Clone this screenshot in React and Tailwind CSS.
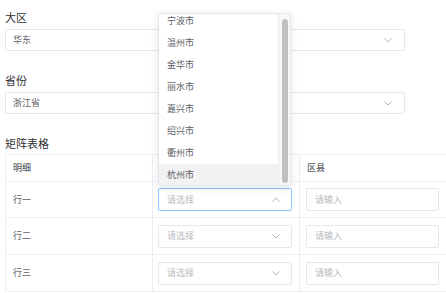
import { useState } from 'react'

const cities = ['宁波市', '温州市', '金华市', '丽水市', '嘉兴市', '绍兴市', '衢州市', '杭州市']
const rows = ['行一', '行二', '行三']

const Chevron = ({ up = false }) => (
  <svg width="8" height="5" viewBox="0 0 8 5" className="shrink-0">
    <path
      d={up ? 'M0.5 4.5 L4 1 L7.5 4.5' : 'M0.5 0.5 L4 4 L7.5 0.5'}
      fill="none"
      stroke="#a8abb2"
      strokeWidth="0.9"
    />
  </svg>
)

const Field = ({ label, value }) => (
  <div className="flex flex-col">
    <p className="h-[14px] text-[11px] leading-[14px] text-[#303133]">{label}</p>
    <div className="mt-[5px] flex h-[22px] w-[400px] items-center justify-between rounded-[2px] border border-[#e4e7ed] pl-[7px] pr-[12px] text-[9px] text-[#606266]">
      <span>{value}</span>
      <Chevron />
    </div>
  </div>
)

export default function App() {
  const [open] = useState(true)

  return (
    <div className="relative h-[293px] w-[446px] overflow-hidden bg-white pl-[5px] pt-[10px] font-['Noto_Sans_CJK_SC','Noto_Sans',sans-serif]">
      <Field label="大区" value="华东" />
      <div className="mt-[22px]">
        <Field label="省份" value="浙江省" />
      </div>

      <p className="mt-[22px] h-[14px] text-[11px] leading-[14px] text-[#303133]">矩阵表格</p>

      {/* Matrix table */}
      <div className="mt-[4px] w-[442px] border-l border-t border-[#ebeef5] text-[9px] text-[#606266]">
        <div className="grid h-[27px] grid-cols-[147px_147px_147px]">
          <div className="flex items-center border-b border-r border-[#ebeef5] pl-[7px] font-medium">明细</div>
          <div className="border-b border-r border-[#ebeef5]" />
          <div className="flex items-center border-b border-r border-[#ebeef5] pl-[7px] font-medium">区县</div>
        </div>
        {rows.map((row, i) => (
          <div key={row} className={`grid grid-cols-[147px_147px_147px] ${i === 0 ? 'h-[36px]' : 'h-[37px]'}`}>
            <div className="flex items-center border-b border-r border-[#ebeef5] pl-[7px]">{row}</div>
            <div className="flex items-center border-b border-r border-[#ebeef5] pl-[5px]">
              <div
                className={`flex h-[23px] w-[134px] items-center justify-between rounded-[2px] border pl-[8px] pr-[11px] text-[#b8bbc2] ${
                  i === 0 ? 'border-[#8cc5ff]' : 'border-[#e4e7ed]'
                }`}
              >
                <span>请选择</span>
                <Chevron up={i === 0 && open} />
              </div>
            </div>
            <div className="flex items-center border-b border-r border-[#ebeef5] pl-[6px]">
              <div className="flex h-[23px] w-[133px] items-center rounded-[2px] border border-[#e4e7ed] pl-[8px] text-[#b8bbc2]">
                请输入
              </div>
            </div>
          </div>
        ))}
      </div>

      {/* City dropdown */}
      {open && (
        <div className="absolute left-[158px] top-[13px] flex h-[173px] w-[133px] overflow-hidden rounded-[2px] border border-[#e4e7ed] bg-white shadow-[0_2px_8px_rgba(0,0,0,0.1)]">
          <ul className="-mt-[4px] flex-1 text-[9px] text-[#606266]">
            {cities.map((city) => (
              <li
                key={city}
                className={`flex h-[22px] items-center pl-[8px] ${city === '杭州市' ? 'bg-[#f2f2f2]' : ''}`}
              >
                {city}
              </li>
            ))}
          </ul>
          <div className="flex w-[12px] justify-center border-l border-[#ececec] bg-[#f7f7f7] pb-[2px] pt-[5px]">
            <div className="w-[6px] rounded-full bg-[#c1c1c1]" />
          </div>
        </div>
      )}
    </div>
  )
}
